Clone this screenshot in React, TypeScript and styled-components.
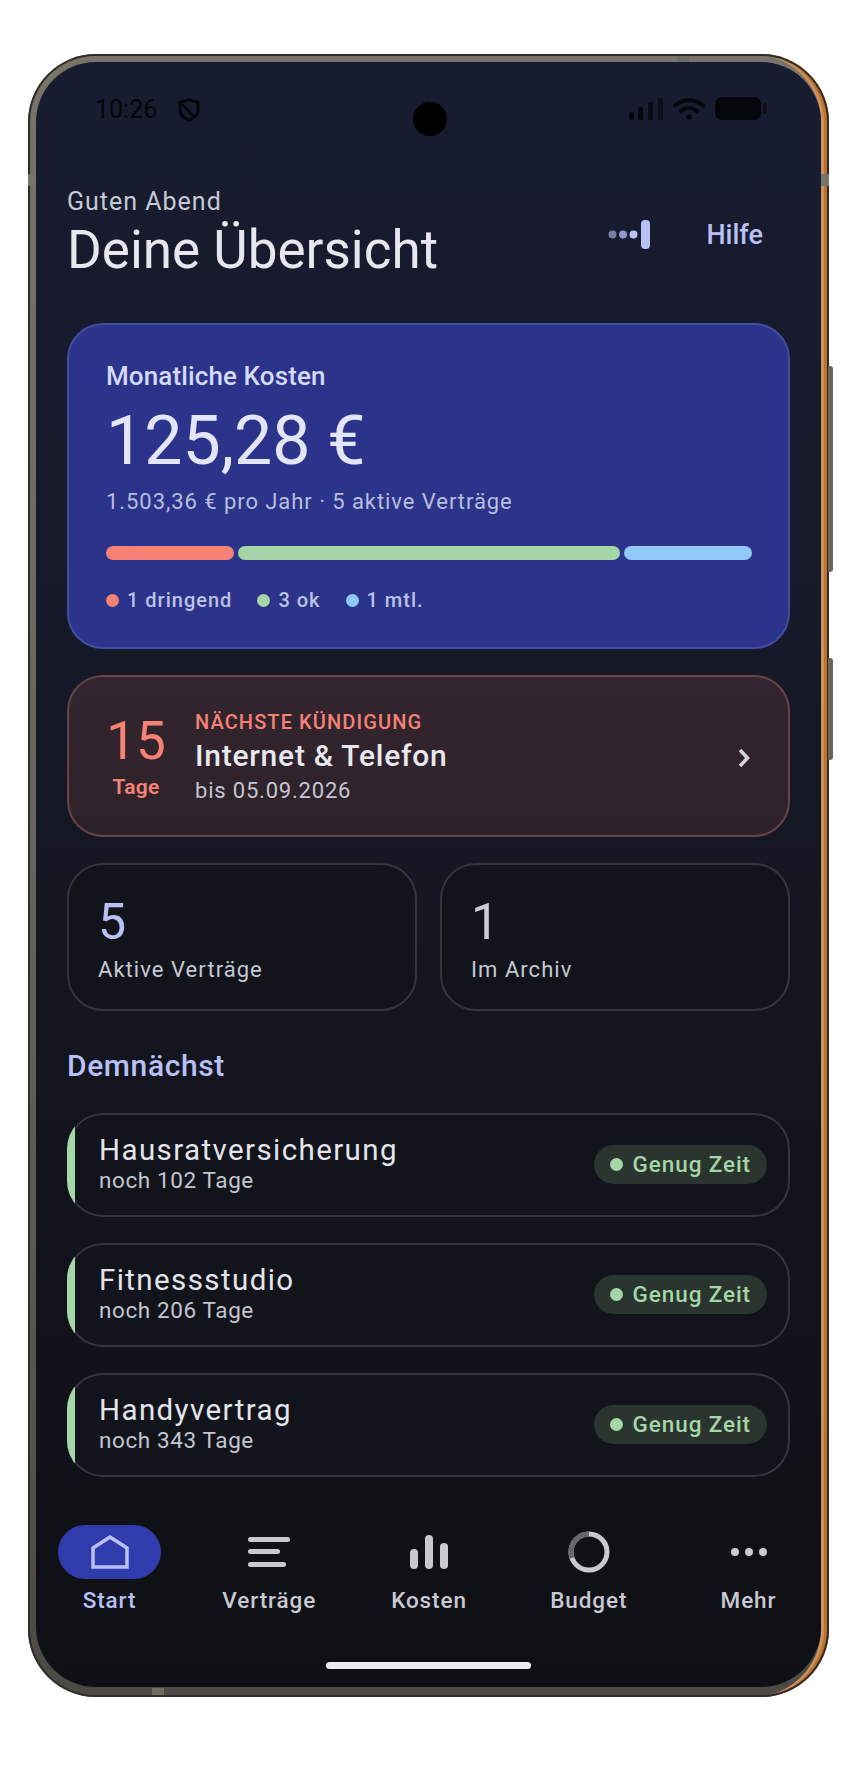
import styled, { createGlobalStyle } from 'styled-components'

const GlobalStyle = createGlobalStyle`
  html, body {
    margin: 0;
    padding: 0;
    background: #fff;
  }
  body {
    font-family: Roboto, "Liberation Sans", sans-serif;
  }
`

const Page = styled.div`
  width: 860px;
  height: 1786px;
  padding: 54px 0 0 28px;
  box-sizing: border-box;
  overflow: hidden;
`
const Phone = styled.div`
  position: relative;
  width: 801px;
  height: 1643px;
  padding: 8px 8px 10px 8px;
  box-sizing: border-box;
  border-radius: 68px;
  background: linear-gradient(180deg, #78746a 0%, #66635a 50%, #4c4a44 100%);
  box-shadow:
    inset 0 0 0 2px #2f2d29,
    inset -5px 0 0 #c2702c,
    inset -8px 0 0 #c8935f;
`
const SideButton = styled.div<{ $top: number; $height: number }>`
  position: absolute;
  right: -4px;
  top: ${(p) => p.$top}px;
  width: 5px;
  height: ${(p) => p.$height}px;
  border-radius: 0 3px 3px 0;
  background: #6b6458;
`
const AntennaLine = styled.div<{ $side: 'left' | 'right' }>`
  position: absolute;
  top: 120px;
  ${(p) => p.$side}: 0;
  width: 8px;
  height: 12px;
  background: #77746a;
`
const EdgeTick = styled.div<{ $edge: 'top' | 'bottom'; $left: number }>`
  position: absolute;
  ${(p) => p.$edge}: 2px;
  left: ${(p) => p.$left}px;
  width: 12px;
  height: 7px;
  background: #6f6c62;
`
const Screen = styled.div`
  position: relative;
  height: 100%;
  border-radius: 60px;
  overflow: hidden;
  background: linear-gradient(180deg, #181c30 0%, #171a2b 30%, #13151f 60%, #0f1015 100%);
  display: flex;
  flex-direction: column;
`
const Camera = styled.div`
  position: absolute;
  top: 40px;
  left: 377px;
  width: 34px;
  height: 34px;
  border-radius: 50%;
  background: #000;
`
const StatusBar = styled.div`
  display: flex;
  align-items: center;
  justify-content: space-between;
  height: 34px;
  margin-top: 30px;
  padding: 0 54px 0 59px;
  color: #05060c;
`
const StatusLeft = styled.div`
  display: flex;
  align-items: center;
  gap: 20px;
  font-size: 25px;
`
const StatusRight = styled.div`
  display: flex;
  align-items: center;
  gap: 10px;
`
const Content = styled.div`
  flex: 1;
  padding: 0 31px;
  display: flex;
  flex-direction: column;
`
const Header = styled.div`
  display: flex;
  justify-content: space-between;
  align-items: center;
  margin-top: 61px;
`
const Greeting = styled.div`
  font-size: 25px;
  line-height: 30px;
  letter-spacing: 1px;
  color: #c6c9d6;
`
const Title = styled.h1`
  margin: 4px 0 0;
  font-size: 53px;
  line-height: 58px;
  font-weight: 400;
  color: #e6e7ef;
`
const HeaderActions = styled.div`
  display: flex;
  align-items: center;
  gap: 56px;
  padding: 3px 27px 0 0;
`
const HelpLink = styled.span`
  font-size: 27px;
  font-weight: 500;
  color: #b9c0f5;
`
const HeroCard = styled.section`
  margin-top: 44px;
  height: 326px;
  box-sizing: border-box;
  padding: 37px 36px 0 37px;
  border-radius: 36px;
  border: 2px solid #424d9f;
  background: #2b348a;
`
const HeroLabel = styled.div`
  font-size: 26px;
  line-height: 28px;
  font-weight: 500;
  letter-spacing: 0.12px;
  color: #d5d9fa;
`
const HeroAmount = styled.div`
  margin-top: 11px;
  font-size: 68px;
  line-height: 80px;
  color: #e3e5fa;
`
const HeroSub = styled.div`
  margin-top: 8px;
  font-size: 22px;
  line-height: 26px;
  letter-spacing: 0.94px;
  color: #b9bede;
`
const Bar = styled.div`
  display: grid;
  grid-template-columns: 1fr 3fr 1fr;
  gap: 4px;
  margin-top: 31px;
`
const Segment = styled.div<{ $color: string }>`
  height: 14px;
  border-radius: 7px;
  background: ${(p) => p.$color};
`
const Legend = styled.div`
  display: flex;
  gap: 25px;
  margin-top: 28px;
`
const LegendItem = styled.span`
  display: flex;
  align-items: center;
  gap: 8px;
  font-size: 20px;
  line-height: 24px;
  font-weight: 500;
  letter-spacing: 1px;
  color: #bdc2e3;
`
const Dot = styled.i<{ $color: string }>`
  display: block;
  width: 13px;
  height: 13px;
  border-radius: 50%;
  background: ${(p) => p.$color};
`
const UrgentCard = styled.section`
  margin-top: 26px;
  height: 162px;
  box-sizing: border-box;
  display: flex;
  align-items: center;
  padding: 0 38px 0 36px;
  border-radius: 36px;
  border: 2px solid #664449;
  background: linear-gradient(180deg, #33252f 0%, #2e2229 100%);
`
const DaysBox = styled.div`
  width: 62px;
  margin-right: 28px;
  display: flex;
  flex-direction: column;
  align-items: center;
  color: #f58274;
`
const DaysNumber = styled.div`
  font-size: 53px;
  line-height: 56px;
`
const DaysLabel = styled.div`
  margin-top: 6px;
  font-size: 21px;
  line-height: 24px;
  font-weight: 600;
  letter-spacing: 0.3px;
`
const UrgentBody = styled.div`
  flex: 1;
  padding-top: 2px;
`
const UrgentLabel = styled.div`
  font-size: 20px;
  line-height: 22px;
  font-weight: 500;
  letter-spacing: 1.1px;
  color: #f58274;
`
const UrgentTitle = styled.div`
  margin-top: 5px;
  font-size: 30px;
  line-height: 36px;
  font-weight: 500;
  letter-spacing: 0.75px;
  color: #e8e8ee;
`
const UrgentSub = styled.div`
  margin-top: 4px;
  font-size: 22px;
  line-height: 26px;
  letter-spacing: 0.8px;
  color: #c6c5d2;
`
const Chevron = styled.svg`
  margin-top: 3px;
`
const Stats = styled.div`
  display: grid;
  grid-template-columns: 1fr 1fr;
  gap: 23px;
  margin-top: 26px;
`
const StatCard = styled.div`
  height: 148px;
  box-sizing: border-box;
  padding: 29px 0 0 29px;
  border-radius: 36px;
  border: 2px solid #33353f;
  background: #12141c;
`
const StatNumber = styled.div<{ $accent?: boolean }>`
  font-size: 50px;
  line-height: 56px;
  color: ${(p) => (p.$accent ? '#b9c0f5' : '#c9cbd6')};
`
const StatLabel = styled.div`
  margin-top: 7px;
  font-size: 22px;
  line-height: 26px;
  letter-spacing: 1.05px;
  color: #c6c8d2;
`
const SectionTitle = styled.h2`
  margin: 38px 0 30px;
  font-size: 30px;
  line-height: 34px;
  font-weight: 500;
  letter-spacing: 0.6px;
  color: #b9c0f5;
`
const RowList = styled.div`
  display: flex;
  flex-direction: column;
  gap: 26px;
`
const Row = styled.div`
  position: relative;
  height: 104px;
  box-sizing: border-box;
  display: flex;
  align-items: center;
  justify-content: space-between;
  padding: 0 23px 0 32px;
  border-radius: 36px;
  overflow: hidden;
  box-shadow: inset 0 0 0 2px #33353f;
  background: #12141b;

  &::before {
    content: '';
    position: absolute;
    left: 0;
    top: 0;
    bottom: 0;
    width: 8px;
    background: #a5d6a7;
  }
`
const RowText = styled.div`
  padding-bottom: 4px;
`
const RowName = styled.div`
  font-size: 29.5px;
  line-height: 34px;
  letter-spacing: 1.4px;
  color: #e4e5ec;
`
const RowSub = styled.div`
  margin-top: 1px;
  font-size: 22.5px;
  line-height: 25px;
  letter-spacing: 0.6px;
  color: #c3c5d0;
`
const Pill = styled.span`
  display: flex;
  align-items: center;
  gap: 10px;
  height: 39px;
  margin-bottom: 2px;
  padding: 0 16px;
  border-radius: 20px;
  background: #2a352f;
  font-size: 22.5px;
  font-weight: 500;
  letter-spacing: 0.9px;
  color: #a5d6a7;
`
const Nav = styled.nav`
  position: absolute;
  left: 0;
  right: 0;
  bottom: 0;
  height: 162px;
  display: flex;
  justify-content: space-between;
  padding: 0 21px 0 22px;
`
const NavItem = styled.div<{ $active?: boolean }>`
  width: 103px;
  display: flex;
  flex-direction: column;
  align-items: center;
  color: ${(p) => (p.$active ? '#b9c0f5' : '#c8c9d1')};
`
const NavIcon = styled.div<{ $active?: boolean }>`
  width: 103px;
  height: 54px;
  display: flex;
  align-items: center;
  justify-content: center;
  border-radius: 27px;
  background: ${(p) => (p.$active ? '#303cab' : 'transparent')};
`
const NavLabel = styled.div`
  margin-top: 8px;
  white-space: nowrap;
  font-size: 22.5px;
  line-height: 26px;
  font-weight: 500;
  letter-spacing: 0.9px;
`
const HomeBar = styled.div`
  position: absolute;
  left: 290px;
  bottom: 18px;
  width: 205px;
  height: 7px;
  border-radius: 4px;
  background: #ecedf1;
`

const upcoming = [
  { name: 'Hausratversicherung', days: 102 },
  { name: 'Fitnessstudio', days: 206 },
  { name: 'Handyvertrag', days: 343 },
]

export default function App() {
  return (
    <>
      <GlobalStyle />
      <Page>
        <Phone>
          <SideButton $top={312} $height={206} />
          <SideButton $top={604} $height={102} />
          <AntennaLine $side="left" />
          <AntennaLine $side="right" />
          <EdgeTick $edge="top" $left={649} />
          <EdgeTick $edge="bottom" $left={124} />
          <Screen>
            <Camera />
            <StatusBar>
              <StatusLeft>
                <span>10:26</span>
                <svg width="24" height="25" viewBox="0 0 24 25" fill="none" stroke="currentColor" strokeWidth="3">
                  <path d="M12 2.5c3 1.6 6 2.3 9 2.5v8c0 5-4 8.3-9 10-5-1.7-9-5-9-10V5c3-.2 6-.9 9-2.5z" />
                  <path d="M5 7l13 14" strokeWidth="2.5" />
                </svg>
              </StatusLeft>
              <StatusRight>
                <svg width="34" height="22" viewBox="0 0 34 22" fill="currentColor">
                  <rect x="0" y="14" width="5" height="8" rx="2" />
                  <rect x="9" y="9" width="5" height="13" rx="2" />
                  <rect x="19" y="4" width="5" height="18" rx="1.5" opacity=".72" />
                  <rect x="29" y="0" width="5" height="22" rx="1.5" opacity=".6" />
                </svg>
                <svg width="32" height="22" viewBox="0 0 32 22" fill="none" stroke="currentColor" strokeWidth="3.8" strokeLinecap="round">
                  <path d="M2 7.5C10 .5 22 .5 30 7.5" />
                  <path d="M8 13c5-4 11-4 16 0" />
                  <circle cx="16" cy="19" r="2.8" fill="currentColor" stroke="none" />
                </svg>
                <svg width="52" height="24" viewBox="0 0 52 24" fill="currentColor">
                  <rect x="0" y="0" width="46" height="23" rx="7" />
                  <rect x="48.5" y="6" width="3" height="11" rx="1.5" opacity=".75" />
                </svg>
              </StatusRight>
            </StatusBar>
            <Content>
              <Header>
                <div>
                  <Greeting>Guten Abend</Greeting>
                  <Title>Deine Übersicht</Title>
                </div>
                <HeaderActions>
                  <svg width="42" height="29" viewBox="0 0 42 29">
                    <circle cx="4.5" cy="14.5" r="4" fill="#7a7ea6" />
                    <circle cx="15" cy="14.5" r="4" fill="#9398c8" />
                    <circle cx="25.5" cy="14.5" r="4" fill="#b9c0f5" />
                    <rect x="33" y="0" width="9" height="29" rx="4" fill="#b9c0f5" />
                  </svg>
                  <HelpLink>Hilfe</HelpLink>
                </HeaderActions>
              </Header>

              <HeroCard>
                <HeroLabel>Monatliche Kosten</HeroLabel>
                <HeroAmount>125,28 €</HeroAmount>
                <HeroSub>1.503,36 € pro Jahr · 5 aktive Verträge</HeroSub>
                <Bar>
                  <Segment $color="#f58274" />
                  <Segment $color="#a5d6a7" />
                  <Segment $color="#90caf9" />
                </Bar>
                <Legend>
                  <LegendItem><Dot $color="#f58274" />1 dringend</LegendItem>
                  <LegendItem><Dot $color="#a5d6a7" />3 ok</LegendItem>
                  <LegendItem><Dot $color="#90caf9" />1 mtl.</LegendItem>
                </Legend>
              </HeroCard>

              <UrgentCard>
                <DaysBox>
                  <DaysNumber>15</DaysNumber>
                  <DaysLabel>Tage</DaysLabel>
                </DaysBox>
                <UrgentBody>
                  <UrgentLabel>NÄCHSTE KÜNDIGUNG</UrgentLabel>
                  <UrgentTitle>Internet &amp; Telefon</UrgentTitle>
                  <UrgentSub>bis 05.09.2026</UrgentSub>
                </UrgentBody>
                <Chevron width="12" height="20" viewBox="0 0 12 20" fill="none" stroke="#d6d2da" strokeWidth="3.5">
                  <path d="M2 2l7.5 8L2 18" />
                </Chevron>
              </UrgentCard>

              <Stats>
                <StatCard>
                  <StatNumber $accent>5</StatNumber>
                  <StatLabel>Aktive Verträge</StatLabel>
                </StatCard>
                <StatCard>
                  <StatNumber>1</StatNumber>
                  <StatLabel>Im Archiv</StatLabel>
                </StatCard>
              </Stats>

              <SectionTitle>Demnächst</SectionTitle>
              <RowList>
                {upcoming.map((item) => (
                  <Row key={item.name}>
                    <RowText>
                      <RowName>{item.name}</RowName>
                      <RowSub>noch {item.days} Tage</RowSub>
                    </RowText>
                    <Pill><Dot $color="#a5d6a7" />Genug Zeit</Pill>
                  </Row>
                ))}
              </RowList>
            </Content>

            <Nav>
              <NavItem $active>
                <NavIcon $active>
                  <svg width="38" height="34" viewBox="0 0 38 34" fill="none" stroke="currentColor" strokeWidth="3.5">
                    <path d="M2 32V13L19 2l17 11v19z" />
                  </svg>
                </NavIcon>
                <NavLabel>Start</NavLabel>
              </NavItem>
              <NavItem>
                <NavIcon>
                  <svg width="42" height="30" viewBox="0 0 42 30" fill="currentColor">
                    <rect x="0" y="0" width="42" height="5" rx="2.5" />
                    <rect x="0" y="12" width="32" height="5" rx="2.5" />
                    <rect x="0" y="25" width="38" height="5" rx="2.5" />
                  </svg>
                </NavIcon>
                <NavLabel>Verträge</NavLabel>
              </NavItem>
              <NavItem>
                <NavIcon>
                  <svg width="38" height="34" viewBox="0 0 38 34" fill="currentColor">
                    <rect x="0" y="14" width="8" height="20" rx="4" />
                    <rect x="15" y="0" width="8" height="34" rx="4" />
                    <rect x="30" y="8" width="8" height="26" rx="4" />
                  </svg>
                </NavIcon>
                <NavLabel>Kosten</NavLabel>
              </NavItem>
              <NavItem>
                <NavIcon>
                  <svg width="42" height="42" viewBox="0 0 42 42" fill="none" strokeWidth="5">
                    <circle cx="21" cy="21" r="18" stroke="#c8c9d1" />
                    <path d="M21 3A18 18 0 0 0 4 27" stroke="#66676e" />
                  </svg>
                </NavIcon>
                <NavLabel>Budget</NavLabel>
              </NavItem>
              <NavItem>
                <NavIcon>
                  <svg width="36" height="8" viewBox="0 0 36 8" fill="currentColor">
                    <circle cx="4" cy="4" r="4" />
                    <circle cx="18" cy="4" r="4" />
                    <circle cx="32" cy="4" r="4" />
                  </svg>
                </NavIcon>
                <NavLabel>Mehr</NavLabel>
              </NavItem>
            </Nav>
            <HomeBar />
          </Screen>
        </Phone>
      </Page>
    </>
  )
}
